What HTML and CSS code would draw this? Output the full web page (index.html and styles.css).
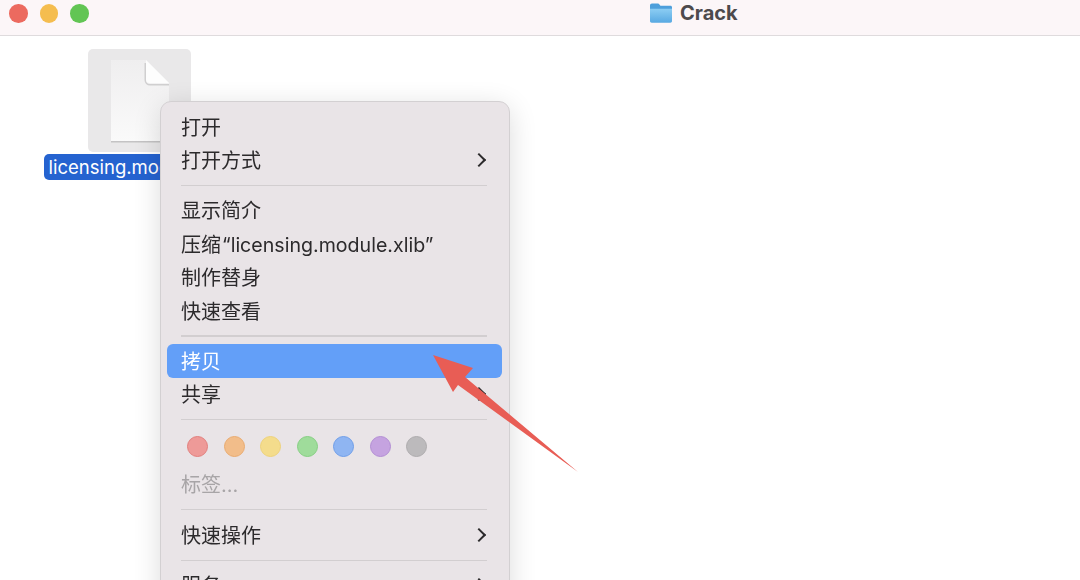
FILE: index.html
```html
<!DOCTYPE html>
<html lang="zh-CN">
<head>
<meta charset="utf-8">
<title>Crack</title>
<link rel="stylesheet" href="styles.css">
</head>
<body>
<div class="window">
  <header class="titlebar">
    <div class="lights">
      <span class="light red"></span>
      <span class="light yellow"></span>
      <span class="light green"></span>
    </div>
    <div class="title">
      <svg class="folder" width="24" height="22" viewBox="0 0 24 22">
        <defs>
          <linearGradient id="fg" x1="0" y1="0" x2="0" y2="1">
            <stop offset="0" stop-color="#8ccdf3"/>
            <stop offset="1" stop-color="#58a9e2"/>
          </linearGradient>
        </defs>
        <path d="M1 3.500C1 2.400 1.800 1.500 3 1.500h5.500c1 0 1.500.4 2 1.100l.9 1.200H21.500c.9 0 1.500.6 1.500 1.500V8H1z" fill="#4e9fdb"/>
        <path d="M1 6.800h22v12.200c0 1-.7 1.700-1.700 1.700H2.700C1.700 20.700 1 20 1 19z" fill="url(#fg)"/>
      </svg>
      <span class="title-text">Crack</span>
    </div>
  </header>
  <main class="canvas">
    <div class="file">
      <div class="tile">
        <svg width="60" height="84" viewBox="0 0 60 84">
          <defs>
            <linearGradient id="pg" x1="0" y1="0" x2="0" y2="1">
              <stop offset="0" stop-color="#efeeef"/>
              <stop offset="1" stop-color="#fafafa"/>
            </linearGradient>
          </defs>
          <path d="M1 1h35l23 23v58H1z" fill="url(#pg)"/>
          <path d="M1 82h58v1.500H1z" fill="#c4c3c4"/>
          <path d="M36 4v17a4 4 0 0 0 4 4h19v1.500H40a5.500 5.500 0 0 1-5.500-5.500V4z" fill="#d0cfd0"/>
          <path d="M36 1l23 23H40a4 4 0 0 1-4-4z" fill="#fdfdfd"/>
        </svg>
      </div>
      <div class="label">licensing.module.xlib</div>
    </div>
    <nav class="menu">
      <div class="item">打开</div>
      <div class="item">打开方式<span class="chev"></span></div>
      <div class="sep"></div>
      <div class="item">显示简介</div>
      <div class="item"><span>压缩<span class="latin">“licensing.module.xlib”</span></span></div>
      <div class="item">制作替身</div>
      <div class="item">快速查看</div>
      <div class="sep"></div>
      <div class="item active">拷贝</div>
      <div class="item">共享<span class="chev"></span></div>
      <div class="sep"></div>
      <div class="tags">
        <span class="dot t-red"></span>
        <span class="dot t-orange"></span>
        <span class="dot t-yellow"></span>
        <span class="dot t-green"></span>
        <span class="dot t-blue"></span>
        <span class="dot t-purple"></span>
        <span class="dot t-gray"></span>
      </div>
      <div class="item muted">标签...</div>
      <div class="sep"></div>
      <div class="item">快速操作<span class="chev"></span></div>
      <div class="sep"></div>
      <div class="item">服务<span class="chev"></span></div>
    </nav>
    <svg class="arrow" width="160" height="130" viewBox="0 0 160 130">
      <path d="M3 1L43 14L35 23L148 118L28 31L23 38Z" fill="#e85d55"/>
    </svg>
  </main>
</div>
</body>
</html>
```
FILE: styles.css
```css
html, body {
  margin: 0;
  padding: 0;
  background: #fff;
  overflow: hidden;
}
.window {
  width: 1080px;
  height: 580px;
  display: flex;
  flex-direction: column;
  font-family: Inter, "Noto Sans CJK SC", sans-serif;
  overflow: hidden;
  filter: blur(0.35px);
}
.titlebar {
  height: 36px;
  flex: none;
  box-sizing: border-box;
  background: #fcf6f8;
  border-bottom: 1px solid #dfdbdd;
  display: flex;
  align-items: flex-start;
  position: relative;
}
.lights {
  display: flex;
  gap: 12px;
  padding: 4px 0 0 9px;
}
.light {
  width: 18.5px;
  height: 18.5px;
  border-radius: 50%;
}
.red { background: #ec6a5f; }
.yellow { background: #f5bd4f; }
.green { background: #62c554; }
.title {
  position: absolute;
  left: 649px;
  top: 1px;
  display: flex;
  align-items: center;
  gap: 7px;
  height: 24px;
}
.title-text {
  font-size: 20px;
  font-weight: 700;
  color: #4d4a4c;
  font-family: Inter, "Noto Sans CJK SC", sans-serif;
}
.canvas {
  flex: 1;
  position: relative;
}
.file {
  position: absolute;
  left: 44px;
  top: 13px;
  width: 191px;
  display: flex;
  flex-direction: column;
  align-items: center;
  gap: 2px;
}
.tile {
  width: 103px;
  height: 103px;
  border-radius: 5px;
  background: #e9e8e9;
  display: flex;
  align-items: center;
  justify-content: center;
}
.label {
  width: 191px;
  height: 26px;
  box-sizing: border-box;
  padding-left: 4.5px;
  border-radius: 5px;
  background: #2563d0;
  color: #fff;
  font-size: 18.5px;
  line-height: 27px;
  white-space: nowrap;
}
.menu {
  position: absolute;
  left: 160px;
  top: 65px;
  width: 350px;
  height: 560px;
  box-sizing: border-box;
  padding: 8.25px 7px 8px 6px;
  background: #e9e4e7;
  border: 1px solid #d3d0d2;
  border-radius: 11px;
  box-shadow: 0 6px 28px rgba(0, 0, 0, 0.14);
}
.item {
  height: 33.5px;
  box-sizing: border-box;
  padding: 0 14px 1.5px;
  border-radius: 6px;
  display: flex;
  align-items: center;
  justify-content: space-between;
  font-size: 20px;
  color: #2c2a2c;
  white-space: nowrap;
}
.item.active {
  background: #639ff8;
  color: #fff;
}
.item.muted {
  color: #a8a5a7;
  margin-bottom: 2.5px;
}
.latin {
  font-size: 19.6px;
  margin-left: 1px;
}
.chev {
  width: 10px;
  height: 10px;
  box-sizing: border-box;
  border-top: 2.5px solid #2c2a2c;
  border-right: 2.5px solid #2c2a2c;
  transform: rotate(45deg);
  margin-right: 4px;
}
.sep {
  height: 1.5px;
  margin: 7.5px 15px 7.5px 14px;
  background: #d2ced0;
}
.muted + .sep {
  margin-bottom: 8.5px;
}
.tags {
  display: flex;
  gap: 15.5px;
  height: 40px;
  padding: 7.75px 0 0 20px;
  box-sizing: border-box;
}
.dot {
  width: 21px;
  height: 21px;
  box-sizing: border-box;
  border-radius: 50%;
  border: 1px solid;
}
.t-red { background: #ee9a98; border-color: #e27f7d; }
.t-orange { background: #f2bd8a; border-color: #e9ab70; }
.t-yellow { background: #f4dc8c; border-color: #eed27b; }
.t-green { background: #9fdc9b; border-color: #86cf83; }
.t-blue { background: #8fb5f2; border-color: #6f9ee9; }
.t-purple { background: #c5a3e0; border-color: #b38ed4; }
.t-gray { background: #bcbabc; border-color: #aeacae; }
.arrow {
  position: absolute;
  left: 430px;
  top: 318px;
}
```
